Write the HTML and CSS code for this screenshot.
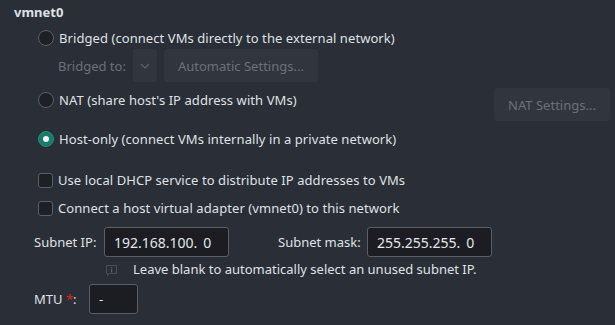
FILE: index.html
```html
<!DOCTYPE html>
<html lang="en">
<head>
    <meta charset="UTF-8">
    <title>vmnet0</title>
    <link rel="stylesheet" href="styles.css">
</head>
<body>

    <div class="panel">
        <div class="title">vmnet0</div>

        <div class="options">
            <!-- Bridged -->
            <label class="choice first">
                <span class="radio"></span>
                <span>Bridged (connect VMs directly to the external network)</span>
            </label>
            <div class="bridged-row">
                <span class="dim">Bridged to:</span>
                <span class="btn combo">
                    <svg width="10" height="6" viewBox="0 0 10 6"><path d="M1 1 L5 5 L9 1" fill="none" stroke="#5f646c" stroke-width="1.2"/></svg>
                </span>
                <span class="btn auto">Automatic Settings...</span>
            </div>

            <!-- NAT -->
            <div class="nat-row">
                <label class="choice">
                    <span class="radio"></span>
                    <span>NAT (share host's IP address with VMs)</span>
                </label>
                <span class="btn nat">NAT Settings...</span>
            </div>

            <!-- Host-only -->
            <label class="choice host">
                <span class="radio checked"></span>
                <span>Host-only (connect VMs internally in a private network)</span>
            </label>

            <label class="choice dhcp">
                <span class="check"></span>
                <span>Use local DHCP service to distribute IP addresses to VMs</span>
            </label>
            <label class="choice adapter">
                <span class="check"></span>
                <span>Connect a host virtual adapter (vmnet0) to this network</span>
            </label>
        </div>

        <div class="subnet-row">
            <span class="field-label ip-label">Subnet IP:</span>
            <span class="input ip">192.168.100.<span class="octet">0</span></span>
            <span class="field-label mask-label">Subnet mask:</span>
            <span class="input ip">255.255.255.<span class="octet">0</span></span>
        </div>

        <div class="hint-row">
            <svg class="info" width="13" height="13" viewBox="0 0 13 13">
                <path d="M1.5 1.5 H11.5 V9.5 H4.5 L2.5 11.5 V9.5 H1.5 Z" fill="none" stroke="#4a4f57" stroke-width="1"/>
                <rect x="6" y="3" width="1.2" height="1.2" fill="#5a5f67"/>
                <rect x="6" y="5" width="1.2" height="3.5" fill="#5a5f67"/>
            </svg>
            <span>Leave blank to automatically select an unused subnet IP.</span>
        </div>

        <div class="mtu-row">
            <span class="field-label mtu-label">MTU <span class="req">*</span>:</span>
            <span class="input mtu">-</span>
        </div>
    </div>

</body>
</html>
```

FILE: styles.css
```css
body {
    font-family: 'Noto Sans', sans-serif;
    font-size: 13px;
    background-color: #2a2e36;
    color: #dfe1e5;
    margin: 0;
    padding: 0;
}

.panel {
    display: flex;
    flex-direction: column;
}

.title {
    font-weight: bold;
    line-height: 18px;
    padding: 3px 0 0 14px;
}

.options {
    display: flex;
    flex-direction: column;
    padding-left: 38px;
}

.choice {
    display: flex;
    align-items: center;
    gap: 5px;
    height: 20px;
    white-space: nowrap;
    letter-spacing: 0.07px;
}

.choice.first {
    margin-top: 7px;
}

.radio {
    width: 14px;
    height: 14px;
    border: 1px solid #5b6068;
    border-radius: 50%;
    background-color: #1d2025;
    display: flex;
    align-items: center;
    justify-content: center;
}

.radio.checked {
    background-color: #1b7a69;
    border-color: #1f8f7b;
}

.radio.checked::after {
    content: "";
    width: 6px;
    height: 6px;
    border-radius: 50%;
    background-color: #f2f4f5;
}

.check {
    width: 13px;
    height: 13px;
    border: 1px solid #5b6068;
    border-radius: 3px;
    background-color: #1d2025;
}

.bridged-row {
    display: flex;
    align-items: center;
    height: 33px;
    margin-top: 1px;
    padding-left: 20px;
}

.dim {
    color: #6b7078;
}

.btn {
    display: flex;
    align-items: center;
    justify-content: center;
    height: 33px;
    background-color: #31363e;
    border-radius: 3px;
    color: #6b7078;
    box-sizing: border-box;
}

.combo {
    width: 24px;
    margin-left: 7px;
}

.auto {
    width: 154px;
    margin-left: 7px;
}

.nat-row {
    display: flex;
    justify-content: space-between;
    align-items: flex-start;
    height: 33px;
    margin-top: 6px;
    padding-right: 5px;
}

.nat-row .choice {
    margin-top: 2px;
}

.nat {
    width: 116px;
}

.choice.host {
    margin-top: 8px;
}

.choice.dhcp {
    margin-top: 21px;
}

.choice.adapter {
    margin-top: 8px;
}

.subnet-row {
    display: flex;
    align-items: center;
    height: 30px;
    margin-top: 9px;
    padding-left: 34px;
}

.field-label {
    white-space: nowrap;
}

.ip-label {
    width: 70px;
}

.mask-label {
    margin-left: 49px;
    width: 89px;
}

.input {
    display: flex;
    align-items: center;
    height: 30px;
    box-sizing: border-box;
    background-color: #1b1d22;
    border: 1px solid #5a5e66;
    border-radius: 3px;
    padding-left: 9px;
    color: #e4e6ea;
}

.input.ip {
    width: 125px;
    font-size: 14px;
}

.octet {
    margin-left: 6px;
}

.hint-row {
    display: flex;
    align-items: center;
    height: 18px;
    margin-top: 3px;
    padding-left: 105px;
    gap: 15px;
}

.info {
    margin-top: 2px;
}

.mtu-row {
    display: flex;
    align-items: center;
    height: 31px;
    margin-top: 5px;
    padding-left: 34px;
}

.mtu-label {
    width: 55px;
}

.req {
    color: #e0201b;
}

.input.mtu {
    width: 49px;
}
```
